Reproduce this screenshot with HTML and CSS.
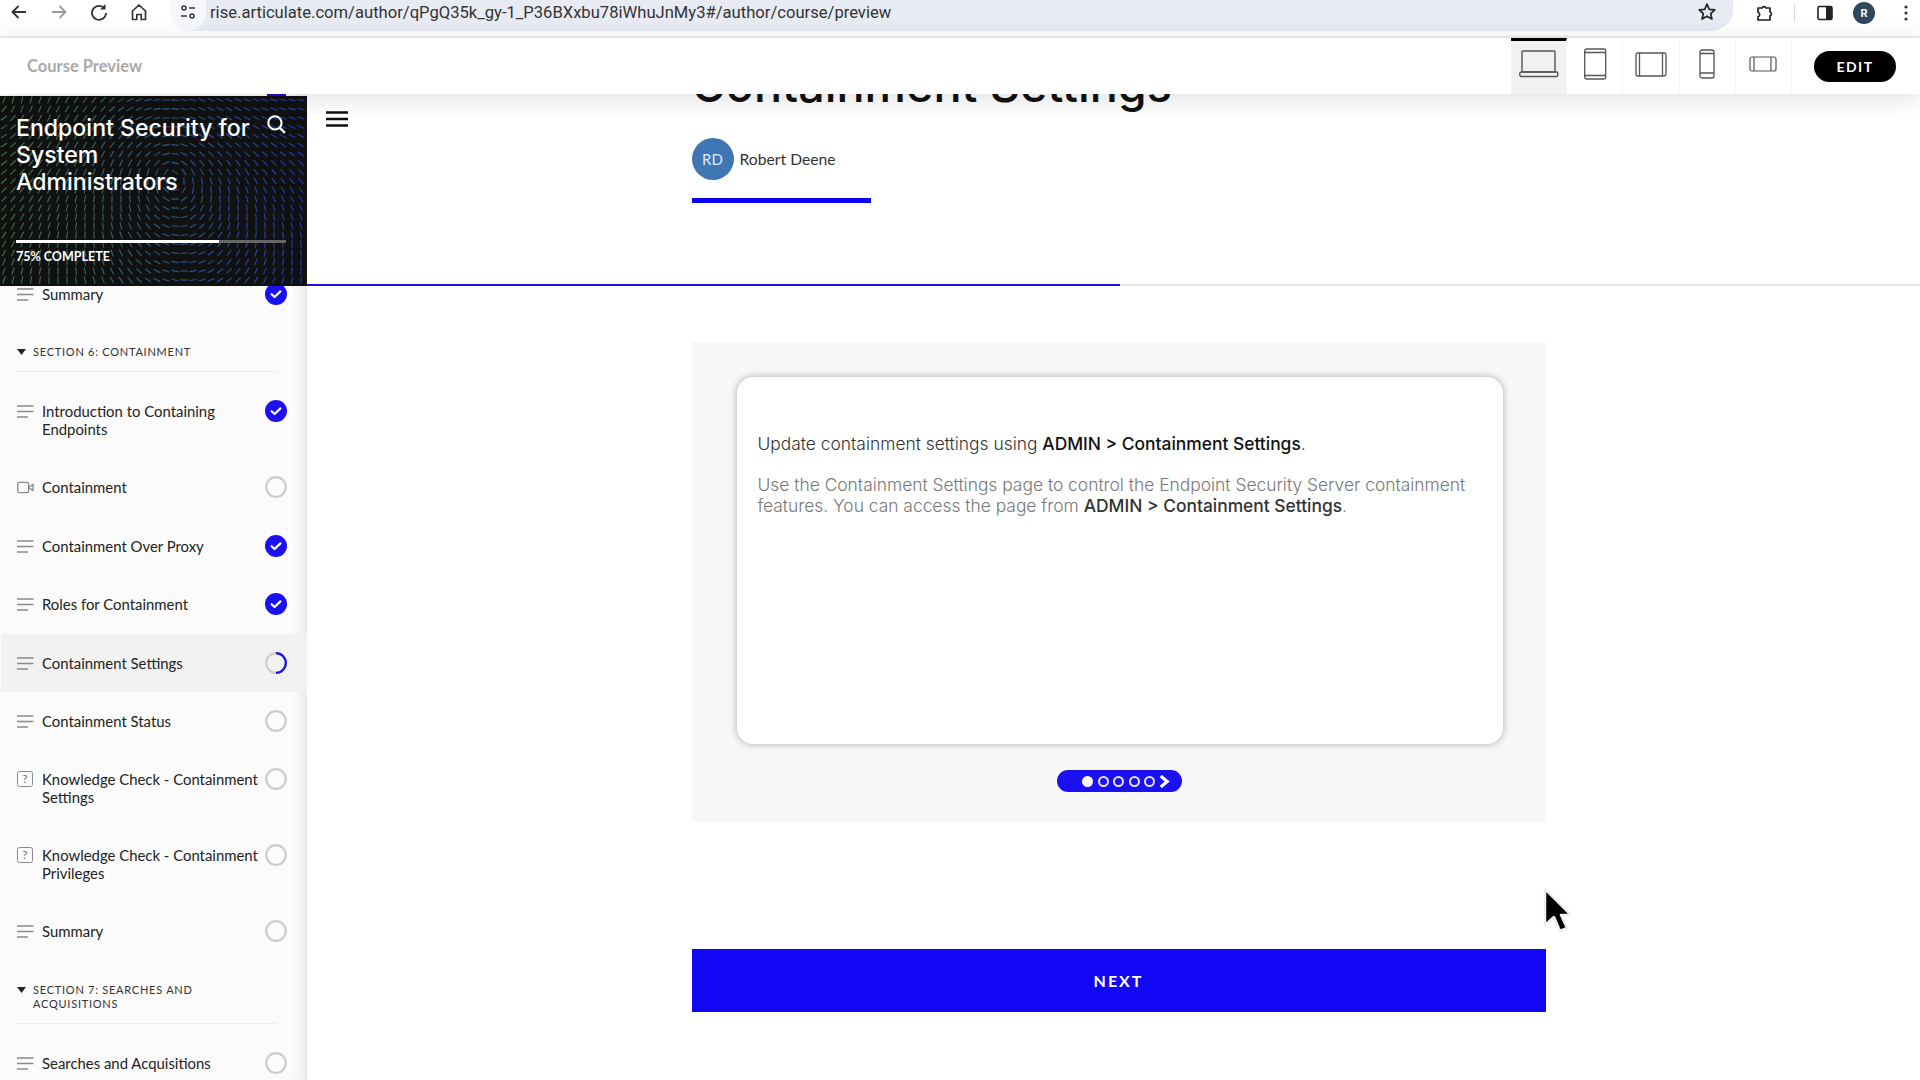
FILE: index.html
```html
<!DOCTYPE html>
<html lang="en">
<head>
<meta charset="utf-8">
<title>Course Preview</title>
<link rel="stylesheet" href="styles.css">
</head>
<body>
<svg class="defs" width="0" height="0" aria-hidden="true">
  <symbol id="i-lines" viewBox="0 0 17 13"><path d="M0 1h16.5M0 6.5h16.5M0 12h11" fill="none" stroke="#8a8a8a" stroke-width="1.5"/></symbol>
  <symbol id="i-video" viewBox="0 0 18 13"><rect x=".8" y="1" width="11.5" height="11" rx="2" fill="none" stroke="#8a8a8a" stroke-width="1.4"/><path d="M12.5 6.5l4.5-3.5v7z" fill="none" stroke="#8a8a8a" stroke-width="1.4" stroke-linejoin="round"/></symbol>
  <symbol id="i-check" viewBox="0 0 22 22"><circle cx="11" cy="11" r="11" fill="#1a10f2"/><path d="M6.6 11.2l3 2.8 5.8-5.6" fill="none" stroke="#fff" stroke-width="2.2" stroke-linecap="round" stroke-linejoin="round"/></symbol>
  <symbol id="i-open" viewBox="0 0 22 22"><circle cx="11" cy="11" r="9.8" fill="none" stroke="#cdcdcd" stroke-width="2.2"/></symbol>
  <symbol id="i-caret" viewBox="0 0 9 6"><path d="M0 0h9L4.5 6z" fill="#222"/></symbol>
</svg>

<header class="browser">
  <div class="nav-icons">
    <svg class="b-icon" viewBox="0 0 20 20"><path d="M17 10H4M9.5 4L3.5 10l6 6" fill="none" stroke="#333" stroke-width="1.8"/></svg>
    <svg class="b-icon" viewBox="0 0 20 20"><path d="M3 10h13M10.5 4l6 6-6 6" fill="none" stroke="#9a9a9a" stroke-width="1.8"/></svg>
    <svg class="b-icon" viewBox="0 0 20 20"><path d="M15.5 6.5A7 7 0 1 0 17 11" fill="none" stroke="#333" stroke-width="1.8"/><path d="M16.5 2v5.5H11z" fill="#333"/></svg>
    <svg class="b-icon" viewBox="0 0 20 20"><path d="M3.5 9L10 3l6.5 6v8.5h-4.3v-5H7.8v5H3.5z" fill="none" stroke="#333" stroke-width="1.7" stroke-linejoin="round"/></svg>
  </div>
  <div class="omnibox">
    <span class="tune">
      <svg viewBox="0 0 16 16" width="16" height="16"><circle cx="4" cy="4" r="2" fill="none" stroke="#333" stroke-width="1.5"/><path d="M9 4h6M1 12h6" stroke="#333" stroke-width="1.5"/><circle cx="12" cy="12" r="2" fill="none" stroke="#333" stroke-width="1.5"/></svg>
    </span>
    <span class="url">rise.articulate.com/author/qPgQ35k_gy-1_P36BXxbu78iWhuJnMy3#/author/course/preview</span>
    <svg class="star" viewBox="0 0 20 20"><path d="M10 2.2l2.3 5.1 5.5.6-4.1 3.7 1.2 5.4L10 14.2 5.1 17l1.2-5.4L2.2 7.9l5.5-.6z" fill="none" stroke="#222" stroke-width="1.7" stroke-linejoin="round"/></svg>
  </div>
  <div class="ext-icons">
    <svg class="b-icon" viewBox="0 0 20 20"><path d="M3 5h4.2a2 2 0 0 1 3.8 0H15v4a2 2 0 0 1 0 3.8V17H3v-3.2a2.4 2.4 0 0 0 0-4.6z" fill="none" stroke="#222" stroke-width="1.7" stroke-linejoin="round"/></svg>
    <span class="sep"></span>
    <svg class="b-icon" viewBox="0 0 20 20"><rect x="3" y="3.5" width="14" height="13" rx="1.5" fill="none" stroke="#222" stroke-width="1.6"/><rect x="11" y="3.5" width="6" height="13" fill="#222"/></svg>
    <span class="profile">R</span>
    <svg class="kebab" viewBox="0 0 4 16"><circle cx="2" cy="2" r="1.6" fill="#333"/><circle cx="2" cy="8" r="1.6" fill="#333"/><circle cx="2" cy="14" r="1.6" fill="#333"/></svg>
  </div>
</header>

<div class="toolbar">
  <div class="tool-title">Course Preview</div>
  <div class="devices">
    <div class="device active"><svg width="40" height="28" viewBox="0 0 40 28"><rect x="3" y="1" width="33" height="21" rx="1" fill="none" stroke="#555" stroke-width="1.4"/><rect x=".8" y="22" width="38" height="4.5" rx="1.5" fill="none" stroke="#555" stroke-width="1.4"/></svg></div>
    <div class="device"><svg width="24" height="32" viewBox="0 0 24 32"><rect x="1.7" y="1" width="21" height="30" rx="1.8" fill="none" stroke="#555" stroke-width="1.3"/><path d="M1.7 4.5h21M1.7 27.5h21" stroke="#555" stroke-width="1.3"/></svg></div>
    <div class="device"><svg width="32" height="25" viewBox="0 0 32 25"><rect x="1" y="1" width="30" height="23" rx="1.8" fill="none" stroke="#555" stroke-width="1.3"/><path d="M4.5 1v23M27.5 1v23" stroke="#555" stroke-width="1.3"/></svg></div>
    <div class="device"><svg width="16" height="30" viewBox="0 0 16 30"><rect x="1" y="1" width="14" height="28" rx="2" fill="none" stroke="#555" stroke-width="1.3"/><path d="M1 4.5h14M1 24h14" stroke="#555" stroke-width="1.3"/></svg></div>
    <div class="device"><svg width="28" height="16" viewBox="0 0 28 16"><rect x="1" y="1" width="26" height="14" rx="2" fill="none" stroke="#555" stroke-width="1.2"/><path d="M5 1v14M22 1v14" stroke="#555" stroke-width="1.2"/></svg></div>
  </div>
  <button class="edit">EDIT</button>
</div>

<div class="main">
  <aside class="sidebar">
    <span class="peek"></span>
    <div class="side-head">
      <svg class="side-art" id="art" width="307" height="190"></svg>
      <div class="side-top">
        <h1 class="course-title">Endpoint Security for System Administrators</h1>
        <svg class="search" viewBox="0 0 20 20"><circle cx="8.5" cy="8.5" r="6.3" fill="none" stroke="#fff" stroke-width="2"/><path d="M13 13l5 5" stroke="#fff" stroke-width="2.2"/></svg>
      </div>
      <div class="side-progress"><span class="side-progress-fill"></span></div>
      <div class="side-pct">75% COMPLETE</div>
    </div>
    <nav class="lessons">
      <div class="row"><svg class="r-icon"><use href="#i-lines"/></svg><span class="r-text">Summary</span><svg class="r-status"><use href="#i-check"/></svg></div>
      <div class="section"><svg class="caret"><use href="#i-caret"/></svg><span>SECTION 6: CONTAINMENT</span></div>
      <div class="row"><svg class="r-icon"><use href="#i-lines"/></svg><span class="r-text">Introduction to Containing Endpoints</span><svg class="r-status"><use href="#i-check"/></svg></div>
      <div class="row"><svg class="r-icon"><use href="#i-video"/></svg><span class="r-text">Containment</span><svg class="r-status"><use href="#i-open"/></svg></div>
      <div class="row"><svg class="r-icon"><use href="#i-lines"/></svg><span class="r-text">Containment Over Proxy</span><svg class="r-status"><use href="#i-check"/></svg></div>
      <div class="row"><svg class="r-icon"><use href="#i-lines"/></svg><span class="r-text">Roles for Containment</span><svg class="r-status"><use href="#i-check"/></svg></div>
      <div class="row current"><svg class="r-icon"><use href="#i-lines"/></svg><span class="r-text">Containment Settings</span><svg class="r-status" viewBox="0 0 22 22"><circle cx="11" cy="11" r="9.8" fill="none" stroke="#cdcdcd" stroke-width="2.2"/><path d="M11 1.2a9.8 9.8 0 0 1 0 19.6" fill="none" stroke="#1a10f2" stroke-width="2.2"/></svg></div>
      <div class="row"><svg class="r-icon"><use href="#i-lines"/></svg><span class="r-text">Containment Status</span><svg class="r-status"><use href="#i-open"/></svg></div>
      <div class="row"><span class="r-quiz">?</span><span class="r-text">Knowledge Check - Containment Settings</span><svg class="r-status"><use href="#i-open"/></svg></div>
      <div class="row"><span class="r-quiz">?</span><span class="r-text">Knowledge Check - Containment Privileges</span><svg class="r-status"><use href="#i-open"/></svg></div>
      <div class="row"><svg class="r-icon"><use href="#i-lines"/></svg><span class="r-text">Summary</span><svg class="r-status"><use href="#i-open"/></svg></div>
      <div class="section"><svg class="caret"><use href="#i-caret"/></svg><span>SECTION 7: SEARCHES AND ACQUISITIONS</span></div>
      <div class="row"><svg class="r-icon"><use href="#i-lines"/></svg><span class="r-text">Searches and Acquisitions</span><svg class="r-status"><use href="#i-open"/></svg></div>
    </nav>
  </aside>

  <main class="content">
    <svg class="burger" viewBox="0 0 22 16"><path d="M0 1.5h22M0 8h22M0 14.500h22" stroke="#111" stroke-width="2.600"/></svg>
    <div class="lesson-head">
      <div class="column">
        <h2 class="lesson-title">Containment Settings</h2>
        <div class="author"><span class="avatar">RD</span><span class="author-name">Robert Deene</span></div>
        <div class="title-bar"></div>
      </div>
    </div>
    <div class="lesson-progress"><span class="lesson-progress-fill"></span></div>
    <div class="lesson-body">
      <div class="column">
        <section class="block">
          <div class="card">
            <p class="lead">Update containment settings using <strong>ADMIN &gt; Containment Settings</strong>.</p>
            <p class="detail">Use the Containment Settings page to control the Endpoint Security Server containment features. You can access the page from <strong>ADMIN &gt; Containment Settings</strong>.</p>
          </div>
          <div class="pager">
            <span class="dot on"></span><span class="dot"></span><span class="dot"></span><span class="dot"></span><span class="dot"></span>
            <svg class="pager-next" viewBox="0 0 10 12"><path d="M1.500 1L7.500 6l-6 5" fill="none" stroke="#fff" stroke-width="3"/></svg>
          </div>
        </section>
        <button class="next">NEXT</button>
      </div>
    </div>
  </main>
</div>

<svg class="cursor" viewBox="0 0 28 48"><path d="M2 2v36l9-8 6 14 7-3-6-13h10z" fill="#000" stroke="#eee" stroke-width="2.500" stroke-linejoin="round"/></svg>
<script src="art.js"></script>
</body>
</html>
```
FILE: styles.css
```css
* { box-sizing: border-box; }
html, body { margin: 0; height: 100%; }
body {
  width: 1920px; height: 1080px; overflow: hidden; position: relative;
  background: #fff; font-family: "Lato", "Liberation Sans", sans-serif; color: #222;
  display: flex; flex-direction: column;
}
.defs { position: absolute; }

/* browser chrome */
.browser {
  height: 38px; flex: none; display: flex; align-items: flex-start;
  background: #fff; border-bottom: 2px solid #eeeeee;
}
.nav-icons { display: flex; gap: 20px; width: 170px; padding: 2px 0 0 9px; }
.b-icon { width: 20px; height: 20px; flex: none; }
.omnibox {
  width: 1563px; height: 31px; flex: none; background: #e8ebf4;
  border-radius: 0 0 24px 24px / 0 0 20px 20px; display: flex; align-items: center;
}
.tune {
  width: 36px; height: 31px; background: #f7f8fc; border-radius: 0 0 18px 18px;
  display: flex; align-items: center; justify-content: center; flex: none; padding-bottom: 7px;
}
.url {
  font-family: "Roboto", sans-serif; font-size: 16.600px; color: #333; margin-left: 4px;
  padding-bottom: 7px; flex: 1; white-space: nowrap;
}
.star { width: 20px; height: 20px; margin: 0 16px 7px 0; flex: none; }
.ext-icons { display: flex; align-items: center; flex: 1; padding: 2px 0 0 22px; }
.sep { width: 1px; height: 18px; background: #d5dcf0; margin: 0 20px 0 19px; }
.profile {
  width: 22px; height: 22px; border-radius: 50%; background: #2c475e; color: #fff;
  font: 700 11px "Roboto", sans-serif; display: flex; align-items: center; justify-content: center;
  margin: 0 0 0 18px;
}
.kebab { width: 4px; height: 16px; margin-left: 29px; }

/* preview toolbar */
.toolbar {
  height: 56px; flex: none; display: flex; align-items: center; position: relative; z-index: 3;
  background: #fff; box-shadow: 0 4px 26px rgba(0,0,0,.13); padding: 0 24px 0 27px;
}
.tool-title { font-size: 16.500px; font-weight: 700; color: #a9a9a9; flex: 1; }
.devices { display: flex; align-self: stretch; margin-right: 22px; }
.device {
  width: 56.200px; display: flex; align-items: center; justify-content: center;
  border-right: 1px solid #f4f4f4; border-top: 3px solid transparent; padding-bottom: 7px;
}
.device.active { background: #f1f1f1; border-top-color: #000; }
.edit {
  width: 82px; height: 31px; border: 0; border-radius: 16px; background: #000; color: #fff;
  font: 700 14px "Lato", sans-serif; letter-spacing: 1.500px;
}

.main { flex: 1; display: flex; min-height: 0; }

/* sidebar */
.sidebar {
  width: 307px; flex: none; background: #fbfbfb; display: flex; flex-direction: column;
  padding-top: 2px; overflow: hidden; position: relative;
  box-shadow: inset -16px 0 14px -12px rgba(0,0,0,.09);
}
.peek { position: absolute; left: 267px; top: 0; width: 19px; height: 2px; background: #1a10c8; }
.side-head {
  height: 190px; flex: none; background: #111; position: relative; z-index: 1; color: #fff;
  padding: 19px 20px 22px 16px; display: flex; flex-direction: column;
}
.side-art { position: absolute; left: 0; top: 0; }
.side-top { position: relative; display: flex; justify-content: space-between; }
.course-title {
  margin: 0; width: 240px; font: 500 23.100px/27px "Inter", sans-serif; letter-spacing: 0;
}
.search { width: 21px; height: 21px; flex: none; margin-top: -1px; }
.side-progress { position: relative; height: 3px; background: #666; margin-top: auto; margin-right: 1px; }
.side-progress-fill { display: block; width: 75%; height: 3px; background: #fff; }
.side-pct { position: relative; font-size: 12.500px; font-weight: 700; line-height: 15px; margin-top: 6px; }
.lessons { margin-top: -21px; }
.row {
  display: flex; align-items: flex-start; padding: 20px 20px 20px 17px; min-height: 58.400px;
}
.row.current { background: #f2f2f2; margin-left: 1px; padding-left: 16px; }
.r-icon { width: 17px; height: 13px; flex: none; margin: 3px 8px 0 0; }
.r-quiz {
  width: 16px; height: 16px; flex: none; margin: 1px 9px 0 0; border: 1.500px solid #8a8a8a; border-radius: 2.500px;
  font-size: 11px; line-height: 13px; text-align: center; color: #666;
}
.r-text { flex: 1; font-size: 14.900px; line-height: 18px; color: #222; padding-right: 4px; }
.r-status { width: 22px; height: 22px; flex: none; margin: -2px 0; }
.section {
  display: flex; align-items: flex-start; margin: 22px 31px 10px 16px; padding: 0 0 12px 0;
  border-bottom: 1px solid #ececec;
  font-size: 11px; line-height: 14px; letter-spacing: .75px; color: #333;
}
.caret { width: 9px; height: 6px; flex: none; margin: 4px 7px 0 1px; }

/* content */
.content { flex: 1; display: flex; flex-direction: column; position: relative; min-width: 0; overflow: hidden; }
.burger { position: absolute; left: 19px; top: 17px; width: 22px; height: 16px; z-index: 1; }
.lesson-head { height: 190px; flex: none; display: flex; justify-content: center; padding-left: 10px; }
.column { width: 854px; flex: none; }
.lesson-title {
  margin: -37px 0 0; font: 500 46.700px/56px "Inter", sans-serif; color: #111; white-space: nowrap; height: 81px;
}
.author { display: flex; align-items: center; gap: 6px; }
.avatar {
  width: 42px; height: 42px; border-radius: 50%; background: #3f76b4; color: #dfe9f5;
  font-size: 15px; display: flex; align-items: center; justify-content: center;
}
.author-name { font-size: 15.700px; color: #333; }
.title-bar { width: 179px; height: 5px; background: #0c00f0; margin-top: 18px; }
.lesson-progress { height: 2px; background: #e6e6e6; flex: none; }
.lesson-progress-fill { display: block; width: 50.400%; height: 2px; background: #1c14d8; }
.lesson-body { flex: 1; display: flex; justify-content: center; padding: 56px 0 0 10px; }
.block {
  height: 480px; background: #f7f7f7; padding: 35px 43px 0 45px;
  display: flex; flex-direction: column; align-items: center;
}
.card {
  width: 100%; height: 367px; background: #fff; border-radius: 16px; padding: 56px 20px 0 21px;
  box-shadow: 0 0 6px 1px rgba(0,0,0,.24);
  font-family: "Inter", sans-serif; font-size: 17.400px; line-height: 21px; font-weight: 300;
}
.card p { margin: 0; }
.lead { color: #333; }
.card .detail { color: #777; margin-top: 20px; }
.card strong { font-weight: 500; color: #111; }
.detail strong { color: #333; }
.pager {
  width: 125px; height: 22px; border-radius: 11px; background: #1a10f2; margin-top: 26px;
  display: flex; align-items: center; gap: 4.600px; padding-left: 25px;
}
.dot { width: 11px; height: 11px; border-radius: 50%; border: 2.200px solid #e6e4fb; flex: none; }
.dot.on { background: #fff; border-color: #fff; }
.pager-next { width: 11px; height: 13px; flex: none; margin-left: -1px; }
.next {
  display: block; width: 100%; height: 63px; margin-top: 127px; border: 0; background: #1207f5; color: #fff;
  font: 700 16px "Lato", sans-serif; letter-spacing: 2px;
}
.cursor { position: absolute; left: 1543px; top: 887px; width: 28px; height: 48px; z-index: 5; }
```
FILE: art.js
```js
// Draws the flow-field pattern of the course cover.
(function () {
  var svg = document.getElementById('art');
  var NS = 'http://www.w3.org/2000/svg';
  var vortices = [[170, 70, 1], [15, 20, -0.45], [250, -35, -0.5]];
  for (var y = 4; y < 190; y += 9) {
    for (var x = 4; x < 307; x += 9) {
      var ax = 0, ay = 0;
      vortices.forEach(function (v) {
        var dx = x - v[0], dy = y - v[1], d = Math.sqrt(dx * dx + dy * dy) + 70;
        ax += -dy / d / d * v[2] * 100;
        ay += dx / d / d * v[2] * 100;
      });
      var len = Math.sqrt(ax * ax + ay * ay) || 1, ux = ax / len * 3.7, uy = ay / len * 3.7;
      var t = x / 307;
      var r = Math.round(62 - 32 * t), g = t < 0.5 ? Math.round(118 - 50 * t) : Math.round(93 - 70 * (t - 0.5));
      var b = Math.round(70 + 120 * t);
      var l = document.createElementNS(NS, 'line');
      l.setAttribute('x1', (x - ux).toFixed(1));
      l.setAttribute('y1', (y - uy).toFixed(1));
      l.setAttribute('x2', (x + ux).toFixed(1));
      l.setAttribute('y2', (y + uy).toFixed(1));
      l.setAttribute('stroke', 'rgb(' + r + ',' + g + ',' + b + ')');
      l.setAttribute('stroke-width', '1.1');
      svg.appendChild(l);
    }
  }
})();
```
